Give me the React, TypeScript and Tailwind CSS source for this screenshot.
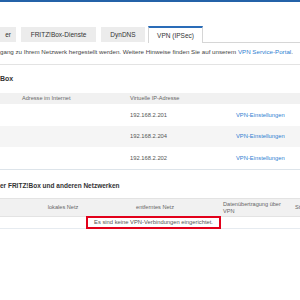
import React from "react";

const font = { fontFamily: '"Liberation Sans", Arial, sans-serif' };

const tabs = [
  { label: "er", width: "w-[16px]", align: "justify-end pr-[5px]" },
  { label: "FRITZ!Box-Dienste", width: "w-[75px]", align: "justify-center" },
  { label: "DynDNS", width: "w-[44px]", align: "justify-center" },
];

const vpnUsers = [
  { ip: "192.168.2.201" },
  { ip: "192.168.2.204" },
  { ip: "192.168.2.202" },
];

function Tabs() {
  return (
    <div className="flex h-[17px] items-start">
      {tabs.map((t, i) => (
        <div
          key={t.label}
          className={`mt-[1px] flex h-[15px] ${t.width} ${t.align} items-center bg-[#ececec] text-[6.5px] text-[#333] ${
            i > 0 ? "ml-[5px]" : ""
          }`}
        >
          {t.label}
        </div>
      ))}
      {/* active tab */}
      <div className="ml-[3px] flex h-[17px] w-[55px] items-center justify-center border-x border-t-2 border-x-[#d6d6d6] border-t-[#2a6cb8] bg-white text-[6.5px] text-[#333]">
        VPN (IPSec)
      </div>
      <div className="h-[17px] flex-1 border-b border-[#d6d6d6]" />
    </div>
  );
}

export default function App() {
  return (
    <div className="h-[300px] w-[300px] overflow-hidden bg-white text-[#444]" style={font}>
      <div className="h-[2px] bg-[#2462a8]" />

      <div className="mt-[24px]">
        <Tabs />
      </div>

      <p className="mt-[5px] whitespace-nowrap text-[6.2px] leading-[8px]">
        gang zu Ihrem Netzwerk hergestellt werden. Weitere Hinweise finden Sie auf unserem{" "}
        <span className="text-[#2f80d1]">VPN Service-Portal</span>.
      </p>

      <div className="mt-[8px] border-t border-[#e3e3e3]" />

      <h2 className="mt-[9px] text-[7px] font-bold leading-[9px] text-[#333]">Box</h2>

      {/* VPN-Benutzer table */}
      <div className="mt-[10px] border-b border-[#dde4ea]">
        <div className="grid h-[11px] grid-cols-[22px_108px_106px_1fr] items-center bg-[#f1f1f1] text-[5.6px] text-[#666]">
          <div />
          <div>Adresse im Internet</div>
          <div>Virtuelle IP-Adresse</div>
          <div />
        </div>
        {vpnUsers.map((u, i) => (
          <div
            key={u.ip}
            className={`grid grid-cols-[22px_108px_106px_1fr] items-center text-[5.8px] ${
              i === 1 ? "h-[21px] bg-[#f5f5f5]" : "h-[22px] bg-white"
            }`}
          >
            <div />
            <div />
            <div className="text-[#555]">{u.ip}</div>
            <div className="text-[#2f80d1]">VPN-Einstellungen</div>
          </div>
        ))}
      </div>

      <h2 className="mt-[11px] whitespace-nowrap text-[6.5px] font-bold leading-[9px] text-[#333]">
        er FRITZ!Box und anderen Netzwerken
      </h2>

      {/* VPN-Verbindungen table */}
      <div className="mt-[8px] border-t border-[#e3e3e3]">
        <div className="grid h-[18px] grid-cols-[30px_66px_118px_76px_1fr] items-center border-b border-[#e3e3e3] bg-[#f1f1f1] text-[5.6px] leading-[7px] text-[#666]">
          <div />
          <div className="text-center">lokales Netz</div>
          <div className="text-center">entferntes Netz</div>
          <div className="pl-[9px]">
            Datenübertragung über
            <br />
            VPN
          </div>
          <div className="pl-[5px]">St</div>
        </div>
        <div className="flex h-[12px] items-center border-b border-[#e6ebf0]">
          <span className="ml-[86px] flex h-[13px] w-[135px] items-center justify-center whitespace-nowrap border-2 border-[#e2001a] text-[5.8px] text-[#555]">
            Es sind keine VPN-Verbindungen eingerichtet.
          </span>
        </div>
      </div>
    </div>
  );
}
